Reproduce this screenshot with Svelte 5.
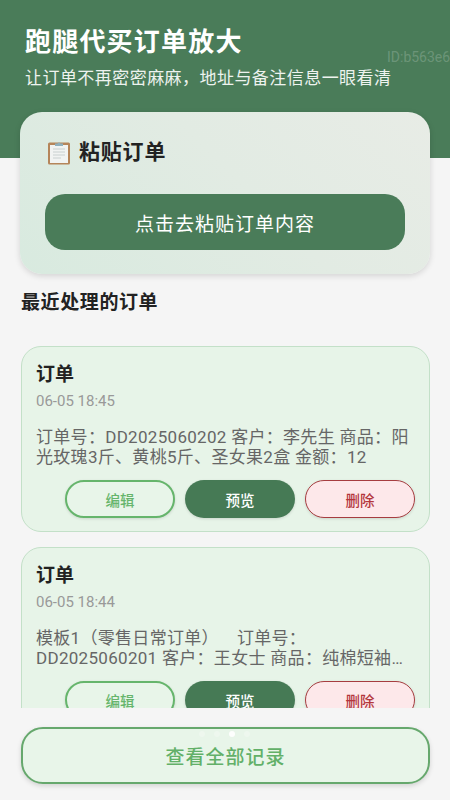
<script>
  const orders = [
    {
      title: "订单",
      time: "06-05 18:45",
      body: "订单号：DD2025060202 客户：李先生 商品：阳光玫瑰3斤、黄桃5斤、圣女果2盒 金额：12"
    },
    {
      title: "订单",
      time: "06-05 18:44",
      body: "模板1（零售日常订单）    订单号：DD2025060201 客户：王女士 商品：纯棉短袖衫2件、运动长裤1条 金额：268"
    }
  ];
</script>

<div class="page">
  <header class="hero">
    <h1>跑腿代买订单放大</h1>
    <p>让订单不再密密麻麻，地址与备注信息一眼看清</p>
    <span class="watermark">ID:b563e6</span>
  </header>

  <section class="paste">
    <div class="pasteTitle">
      <svg width="24" height="25" viewBox="0 0 24 25" aria-hidden="true">
        <rect x="1" y="2.5" width="22" height="22" rx="1.5" fill="#b5855a" />
        <rect x="3" y="5" width="18" height="18" fill="#f1f3f2" />
        <path d="M6 9h12M6 12h12M6 15h12M6 18h8" stroke="#c9d0d0" stroke-width="1" />
        <path d="M8 6V3.5h2.5a1.6 1.6 0 0 1 3 0H16V6z" fill="#8fb0bd" />
      </svg>
      <h2>粘贴订单</h2>
    </div>
    <button class="pasteBtn">点击去粘贴订单内容</button>
  </section>

  <h3 class="recent">最近处理的订单</h3>

  <div class="list">
    {#each orders as order}
      <article class="order">
        <h4>{order.title}</h4>
        <div class="time">{order.time}</div>
        <p class="body">{order.body}</p>
        <div class="actions">
          <button class="edit">编辑</button>
          <button class="preview">预览</button>
          <button class="del">删除</button>
        </div>
      </article>
    {/each}
  </div>

  <footer class="bottom">
    <button class="all">查看全部记录</button>
    <div class="dots">
      <i></i><i></i><i class="on"></i><i></i>
    </div>
  </footer>
</div>

<style>
  :global(body) {
    margin: 0;
    background: #f5f5f5;
  }

  .page {
    width: 450px;
    height: 800px;
    display: flex;
    flex-direction: column;
    overflow: hidden;
    background: #f5f5f5;
    font-family: Roboto, "Noto Sans CJK SC", sans-serif;
  }

  button {
    font: inherit;
    padding: 0;
    cursor: pointer;
  }

  .hero {
    position: relative;
    flex: none;
    height: 158px;
    box-sizing: border-box;
    padding: 26px 0 0 25px;
    background: #4a7c59;
    color: #fff;
  }

  .hero h1 {
    margin: 0;
    font-size: 26px;
    line-height: 32px;
    font-weight: 700;
    letter-spacing: 1.2px;
  }

  .hero p {
    margin: 8px 0 0;
    font-size: 17px;
    line-height: 24px;
    letter-spacing: 0.45px;
    color: #eef3ef;
  }

  .watermark {
    position: absolute;
    left: 387px;
    top: 48px;
    font-size: 14px;
    line-height: 18px;
    white-space: nowrap;
    color: rgba(255, 255, 255, 0.2);
  }

  .paste {
    flex: none;
    box-sizing: border-box;
    width: 410px;
    height: 162px;
    margin: -46px 0 0 20px;
    padding: 27px 25px 0;
    border-radius: 22px;
    background: linear-gradient(45deg, #d8eadf, #e2ebe3 55%, #e8ece6);
    box-shadow: 0 2px 6px rgba(0, 0, 0, 0.14);
    position: relative;
  }

  .pasteTitle {
    display: flex;
    align-items: center;
    gap: 8px;
    padding-left: 2px;
    height: 26px;
  }

  .pasteTitle h2 {
    margin: 0;
    font-size: 21px;
    line-height: 26px;
    font-weight: 700;
    letter-spacing: 0.8px;
    color: #222;
  }

  .pasteBtn {
    display: block;
    width: 360px;
    height: 56px;
    margin-top: 29px;
    border: 0;
    border-radius: 20px;
    background: #4a7c59;
    color: #fff;
    font-size: 19px;
    letter-spacing: 1px;
  }

  .recent {
    flex: none;
    margin: 19px 0 0 21px;
    font-size: 19px;
    line-height: 20px;
    font-weight: 700;
    letter-spacing: 0.6px;
    color: #222;
  }

  .list {
    flex: 1;
    min-height: 0;
    overflow: hidden;
    display: flex;
    flex-direction: column;
    gap: 15px;
    padding: 33px 20px 0 21px;
  }

  .order {
    flex: none;
    box-sizing: border-box;
    height: 186px;
    padding: 15px 14px 0;
    border: 1px solid #c3e0c8;
    border-radius: 20px;
    background: #e7f4e8;
  }

  .order h4 {
    margin: 0;
    font-size: 19px;
    line-height: 26px;
    font-weight: 700;
    color: #222;
  }

  .time {
    margin-top: 4px;
    font-size: 15px;
    line-height: 18px;
    color: #999;
  }

  .body {
    margin: 17px 0 0;
    font-size: 17px;
    line-height: 20px;
    letter-spacing: 0.3px;
    color: #666;
    white-space: pre-wrap;
    display: -webkit-box;
    -webkit-box-orient: vertical;
    -webkit-line-clamp: 2;
    line-clamp: 2;
    overflow: hidden;
  }

  .actions {
    display: flex;
    justify-content: flex-end;
    gap: 10px;
    margin-top: 13px;
  }

  .actions button {
    box-sizing: border-box;
    width: 110px;
    height: 38px;
    border-radius: 19px;
    font-size: 14.5px;
    font-weight: 500;
  }

  .edit {
    border: 2px solid #66b56c;
    background: #e8f5e9;
    color: #66b56c;
    box-shadow: 0 1px 3px rgba(0, 0, 0, 0.12);
  }

  .preview {
    border: 0;
    background: #467a55;
    color: #fff;
    box-shadow: 0 1px 3px rgba(0, 0, 0, 0.12);
  }

  .del {
    border: 1.5px solid #a63d40;
    background: #fde8ea;
    color: #b3363d;
    box-shadow: 0 1px 3px rgba(0, 0, 0, 0.12);
  }

  .bottom {
    position: relative;
    flex: none;
    box-sizing: border-box;
    height: 92px;
    padding: 19px 20px 0 21px;
    background: #f5f5f5;
  }

  .all {
    display: block;
    box-sizing: border-box;
    width: 409px;
    height: 57px;
    border: 2.5px solid #66a86d;
    border-radius: 22px;
    background: #e8f5e9;
    color: #62b068;
    font-size: 19px;
    font-weight: 500;
    letter-spacing: 1px;
    box-shadow: 0 2px 5px rgba(0, 0, 0, 0.14);
  }

  .dots {
    position: absolute;
    left: 199px;
    top: 23px;
    display: flex;
    gap: 9px;
  }

  .dots i {
    width: 6px;
    height: 6px;
    border-radius: 50%;
    background: rgba(255, 255, 255, 0.25);
  }

  .dots i.on {
    background: rgba(255, 255, 255, 0.9);
  }
</style>
